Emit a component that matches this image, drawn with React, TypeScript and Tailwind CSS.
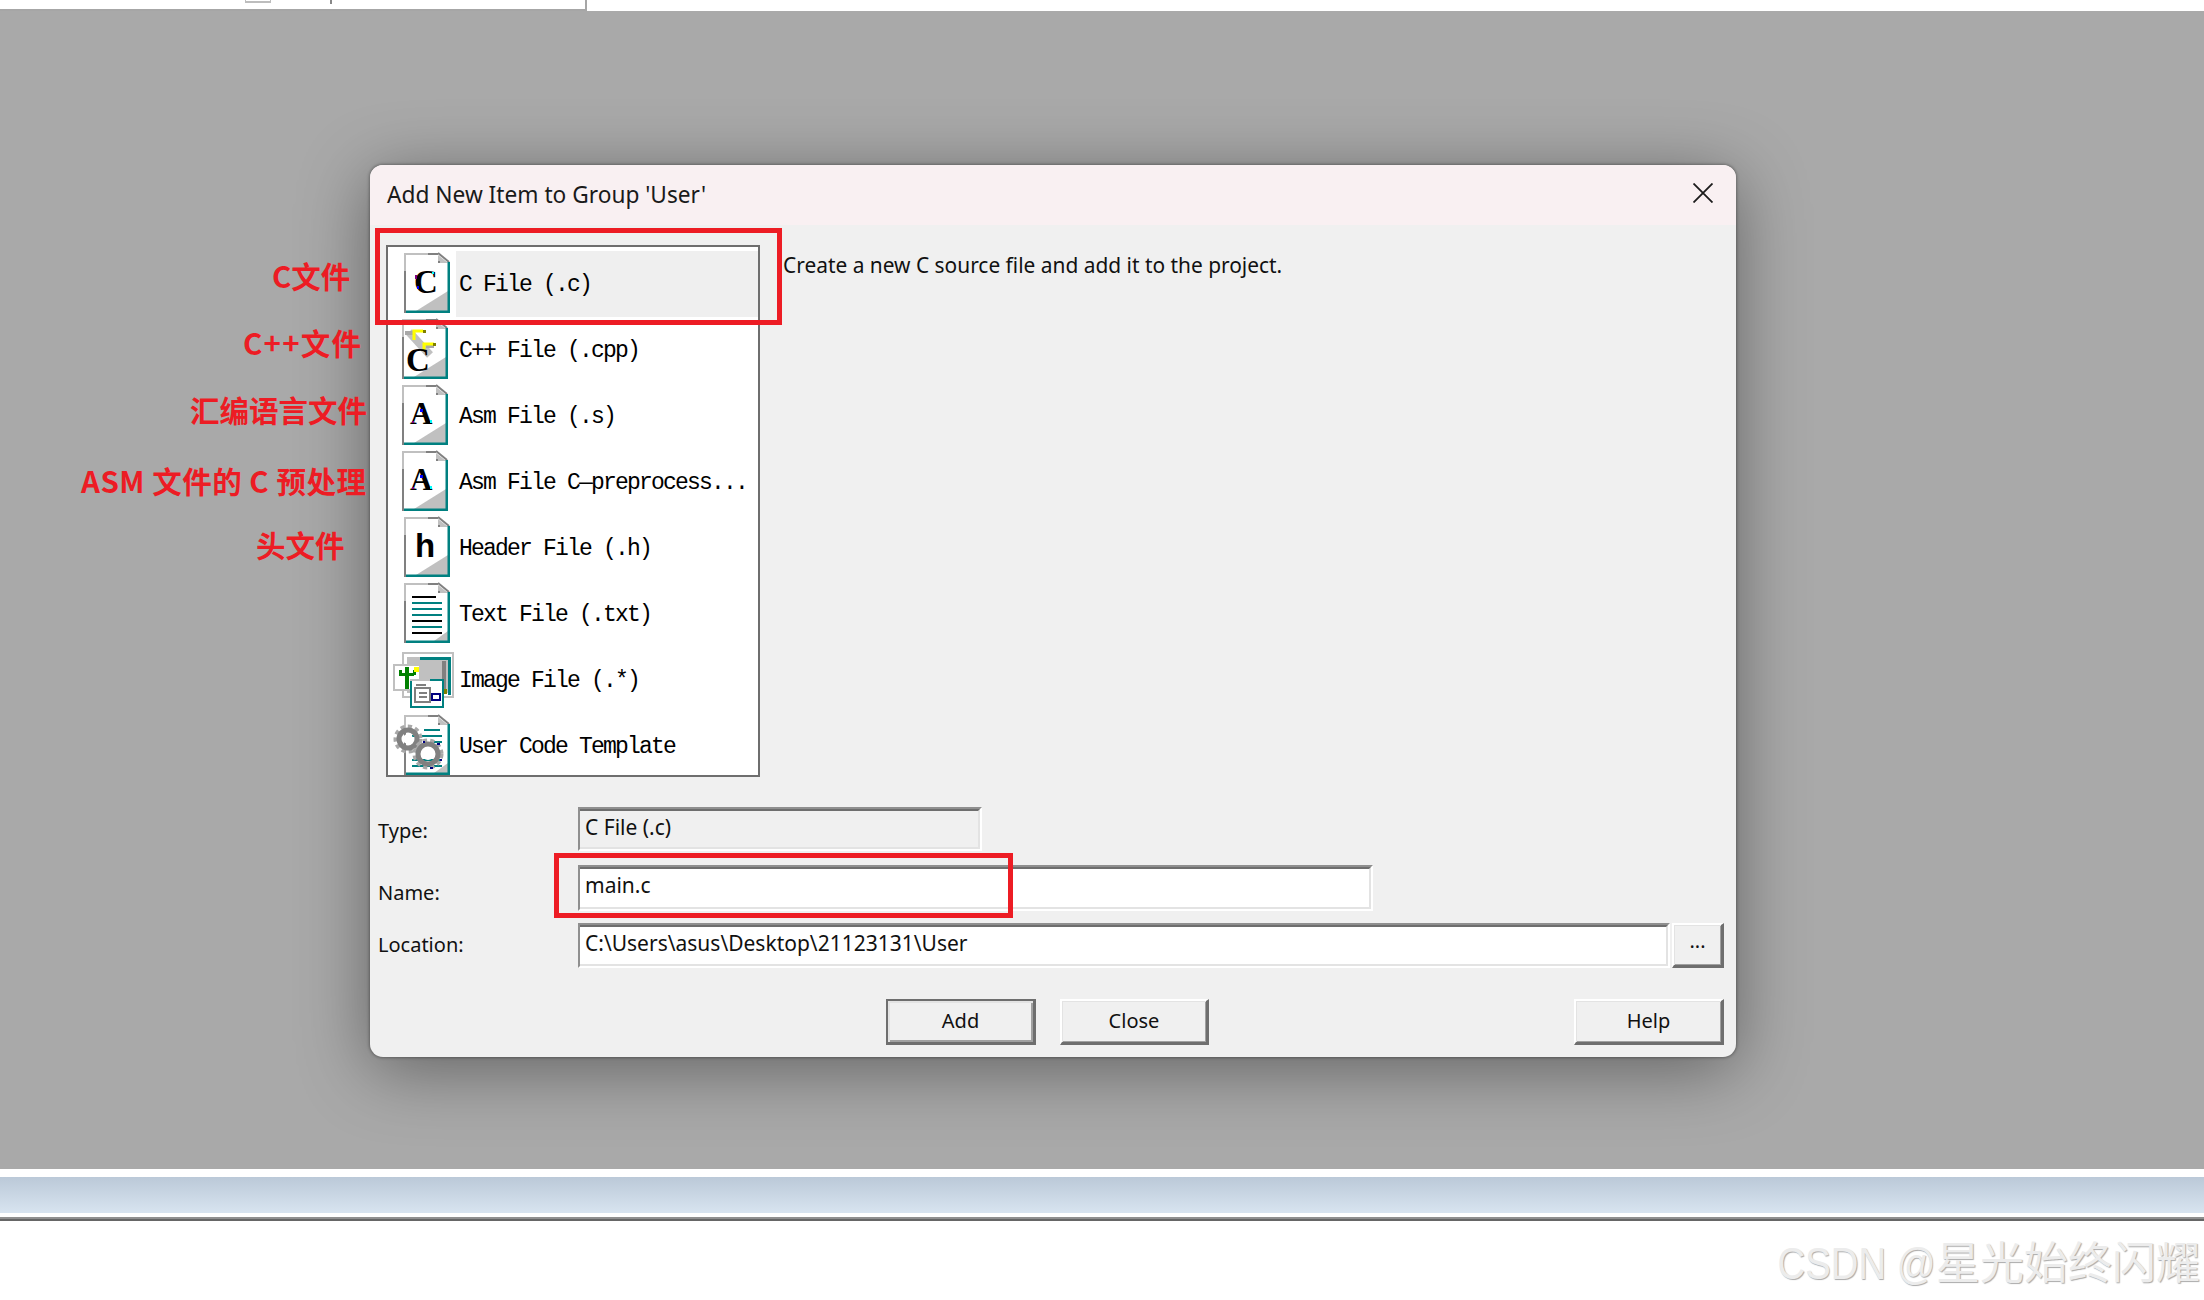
import { ReactNode } from "react"

const sans = "font-['Noto_Sans','Liberation_Sans',sans-serif]"

// Document page with folded corner, shared by most of the list icons
function Page({ x, shade = true, children }: { x: number; shade?: boolean; children?: ReactNode }) {
  return (
    <g transform={`translate(${x},2)`}>
      <polygon points="0,0 34,0 44,9 44,58 0,58" fill="#fff" />
      {shade && <polygon points="12,58 44,38 44,58" fill="#c0c0c0" />}
      {!shade && <polygon points="30,58 44,48 44,58" fill="#c0c0c0" />}
      <rect x="0" y="0" width="2" height="18" fill="#c0c0c0" />
      <rect x="0" y="18" width="2" height="42" fill="#808080" />
      <rect x="0" y="0" width="24" height="2" fill="#c0c0c0" />
      <rect x="24" y="0" width="10" height="2" fill="#808080" />
      <polygon points="34,2 34,10 44,10" fill="#c0c0c0" />
      <line x1="34" y1="0" x2="45" y2="9" stroke="#808080" strokeWidth="2" />
      <rect x="34" y="8" width="2" height="2" fill="#808080" />
      <rect x="43.5" y="9" width="2.5" height="51" fill="#008080" />
      <rect x="2" y="57.5" width="44" height="2.5" fill="#008080" />
      {children}
    </g>
  )
}

function Letter({ ch, x, y, size = 33, family = "Liberation Serif" }: { ch: string; x: number; y: number; size?: number; family?: string }) {
  return (
    <text x={x} y={y} fontFamily={family} fontWeight="700" fontSize={size} fill="#000">
      {ch}
    </text>
  )
}

function Gear({ cx, cy, r }: { cx: number; cy: number; r: number }) {
  return (
    <g>
      <circle cx={cx} cy={cy} r={r} fill="none" stroke="#a8a8a8" strokeWidth="5" strokeDasharray="4 3" />
      <circle cx={cx} cy={cy} r={r - 3} fill="none" stroke="#808080" strokeWidth="5" />
      <circle cx={cx} cy={cy} r={r - 7} fill="#fff" />
    </g>
  )
}

const slot = { width: 68, height: 66, viewBox: "0 0 68 66", className: "shrink-0" }

function CIcon() {
  return (
    <svg {...slot}>
      <Page x={16}>
        <Letter ch="C" x={10} y={40} />
        <rect x="11" y="22" width="2" height="4" fill="#800080" />
        <rect x="13" y="33" width="2" height="3" fill="#0000ff" />
        <rect x="28" y="19" width="2" height="2" fill="#00ffff" />
      </Page>
    </svg>
  )
}

function CppIcon() {
  return (
    <svg {...slot}>
      <Page x={14}>
        <line x1="7" y1="13" x2="28" y2="36" stroke="#c0c0c0" strokeWidth="8" />
        <rect x="3" y="12" width="10" height="4" fill="#a8a8a8" />
        <rect x="24" y="25" width="8" height="4" fill="#a8a8a8" />
        <polyline points="12,21 12,12 21,12" fill="none" stroke="#ffff00" strokeWidth="3" />
        <polyline points="22,31 22,25 32,25" fill="none" stroke="#ffff00" strokeWidth="3" />
        <rect x="21" y="11" width="3" height="3" fill="#808000" />
        <rect x="31" y="24" width="3" height="3" fill="#808000" />
        <Letter ch="C" x={4} y={52} size={33} />
      </Page>
    </svg>
  )
}

function AIcon() {
  return (
    <svg {...slot}>
      <Page x={14}>
        <Letter ch="A" x={8} y={39} size={31} />
        <rect x="10" y="36" width="2" height="2" fill="#800080" />
        <rect x="18" y="24" width="3" height="3" fill="#0000ff" />
        <rect x="28" y="35" width="2" height="3" fill="#00ffff" />
      </Page>
    </svg>
  )
}

function HIcon() {
  return (
    <svg {...slot}>
      <Page x={16}>
        <Letter ch="h" x={11} y={40} size={33} family="Liberation Sans" />
      </Page>
    </svg>
  )
}

function TextIcon() {
  const lines: [number, number, string][] = [
    [15, 24, "#000"],
    [21, 30, "#008080"],
    [27, 30, "#008080"],
    [33, 30, "#008080"],
    [39, 30, "#000"],
    [45, 30, "#008080"],
    [51, 30, "#000"],
  ]
  return (
    <svg {...slot}>
      <Page x={16} shade={false}>
        {lines.map(([y, w, c]) => (
          <rect key={y} x="8" y={y - 2} width={w} height="2" fill={c} />
        ))}
      </Page>
    </svg>
  )
}

function ImageIcon() {
  return (
    <svg {...slot} shapeRendering="crispEdges">
      {/* back frame */}
      <rect x="15" y="6" width="50" height="44" fill="#fff" stroke="#c0c0c0" strokeWidth="2" />
      <rect x="19" y="10" width="42" height="36" fill="#c0c0c0" />
      <rect x="32" y="10" width="30" height="3" fill="#008080" />
      <rect x="60" y="10" width="3" height="38" fill="#008080" />
      <rect x="54" y="14" width="4" height="30" fill="#808080" />
      <rect x="53" y="42" width="6" height="5" fill="#808000" />
      {/* small picture */}
      <rect x="6" y="18" width="26" height="25" fill="#fff" stroke="#c0c0c0" strokeWidth="2" />
      <rect x="17" y="20" width="4" height="22" fill="#008000" />
      <rect x="11" y="26" width="15" height="3" fill="#008000" />
      <rect x="11" y="23" width="3" height="5" fill="#008000" />
      <rect x="25" y="23" width="3" height="5" fill="#008000" />
      <rect x="26" y="20" width="5" height="5" fill="#ffff00" />
      {/* front window */}
      <rect x="23" y="33" width="32" height="27" fill="#fff" stroke="#008080" strokeWidth="2" />
      <rect x="22" y="32" width="20" height="2" fill="#c0c0c0" />
      <rect x="28" y="37" width="10" height="2" fill="#808080" />
      <rect x="27" y="41" width="15" height="14" fill="#fff" stroke="#808080" strokeWidth="2" />
      <rect x="31" y="45" width="8" height="2" fill="#808080" />
      <rect x="31" y="49" width="8" height="2" fill="#808080" />
      <rect x="44" y="47" width="8" height="6" fill="#fff" stroke="#000080" strokeWidth="2" />
    </svg>
  )
}

function TemplateIcon() {
  return (
    <svg {...slot}>
      <Page x={16} shade={false}>
        <rect x="20" y="14" width="16" height="2" fill="#008080" />
        <rect x="8" y="20" width="30" height="2" fill="#008080" />
        <rect x="28" y="26" width="10" height="2" fill="#008080" />
        <rect x="8" y="44" width="30" height="2" fill="#008080" />
        <rect x="8" y="50" width="30" height="2" fill="#008080" />
      </Page>
      <Gear cx={20} cy={26} r={12} />
      <Gear cx={40} cy={41} r={13} />
      <rect x="35" y="28" width="2" height="2" fill="#000080" />
      <rect x="49" y="30" width="3" height="2" fill="#000080" />
      <rect x="52" y="46" width="2" height="2" fill="#000080" />
      <rect x="42" y="54" width="3" height="2" fill="#000080" />
    </svg>
  )
}

const fileRows: { label: string; icon: ReactNode; active?: boolean }[] = [
  { label: "C File (.c)", icon: <CIcon />, active: true },
  { label: "C++ File (.cpp)", icon: <CppIcon /> },
  { label: "Asm File (.s)", icon: <AIcon /> },
  { label: "Asm File C—preprocess...", icon: <AIcon /> },
  { label: "Header File (.h)", icon: <HIcon /> },
  { label: "Text File (.txt)", icon: <TextIcon /> },
  { label: "Image File (.*)", icon: <ImageIcon /> },
  { label: "User Code Template", icon: <TemplateIcon /> },
]

// Sunken Win32 edit box
function Field({ value, className, fill }: { value: string; className: string; fill: string }) {
  return (
    <div className={`border-2 border-t-[#8f8f8f] border-l-[#8f8f8f] border-r-white border-b-white ${className}`}>
      <div
        className={`h-full border-t-2 border-l-0 border-r-2 border-b-2 border-t-[#6e6e6e] border-r-[#e3e3e3] border-b-[#e3e3e3] pl-[5px] text-[21px] leading-[32px] text-[#111] ${fill}`}
      >
        {value}
      </div>
    </div>
  )
}

function Button({ label, className, primary }: { label: string; className: string; primary?: boolean }) {
  return (
    <div
      className={`flex items-center justify-center border-2 text-[20px] text-[#111] bg-[#f0f0f0] ${
        primary
          ? "border-[#6e6e6e] border-b-[3px] border-r-[3px] shadow-[inset_2px_2px_0_#e3e3e3,inset_-2px_-2px_0_#a0a0a0]"
          : "border-t-white border-l-white border-r-[#6e6e6e] border-b-[#6e6e6e] border-b-[3px] border-r-[3px] shadow-[inset_1px_1px_0_#e3e3e3,inset_-1px_-1px_0_#a0a0a0]"
      } ${className}`}
    >
      {label}
    </div>
  )
}

export default function App() {
  return (
    <div className={`relative flex h-[1300px] w-[2204px] flex-col overflow-hidden bg-white ${sans}`}>
      {/* Strip of the window behind */}
      <div className="flex h-[11px] shrink-0">
        <div className="relative h-[11px] w-[587px] border-r-2 border-b-2 border-[#a6a6a6]">
          <div className="absolute left-[245px] top-0 h-[3px] w-[26px] border-x border-b-2 border-[#bdbdbd]" />
          <div className="absolute left-[330px] top-0 h-[4px] w-[2px] bg-[#888]" />
        </div>
      </div>

      {/* Dimmed workspace */}
      <div className="h-[1158px] shrink-0 bg-[#a9a9a9] pl-[370px] pt-[154px]">
        <div className="h-[892px] w-[1366px] overflow-hidden rounded-[13px] bg-[#f0f0f0] shadow-[0_0_3px_1px_rgba(0,0,0,0.3),0_12px_70px_rgba(0,0,0,0.42)]">
          <div className="flex h-[60px] items-center justify-between bg-[#f9f0f2] pl-[17px] pr-[23px]">
            <span className="text-[22.7px] text-[#1a1a1a]">Add New Item to Group 'User'</span>
            <svg width="20" height="20" viewBox="0 0 20 20" className="-mt-[4px]">
              <path d="M0.5 0.5L19.5 19.5M19.5 0.5L0.5 19.5" stroke="#1c1c1c" strokeWidth="1.8" fill="none" />
            </svg>
          </div>

          <div className="flex pl-4 pt-5">
            <div className="h-[532px] w-[374px] shrink-0 overflow-hidden border-2 border-[#6e6e6e] bg-white">
              <div className="pt-1">
                {fileRows.map((row) => (
                  <div key={row.label} className="flex h-[66px] items-start">
                    {row.icon}
                    <div
                      className={`flex h-[66px] flex-1 items-center pl-[3px] pt-[2px] font-['Liberation_Mono',monospace] text-[23px] tracking-[-1.8px] text-black ${
                        row.active ? "bg-[#efefef]" : ""
                      }`}
                    >
                      {row.label}
                    </div>
                  </div>
                ))}
              </div>
            </div>
            <p className="ml-[23px] mt-[5px] text-[20.9px] leading-[30px] text-[#111]">
              Create a new C source file and add it to the project.
            </p>
          </div>

          <div className="mt-[30px] flex flex-col pl-[8px] pr-[12px] text-[20px] text-[#111]">
            <div className="flex items-start">
              <span className="w-[200px] pt-[9px] leading-[30px]">Type:</span>
              <Field value="C File (.c)" className="h-[44px] w-[404px]" fill="bg-[#f0f0f0]" />
            </div>
            <div className="mt-[14px] flex items-start">
              <span className="w-[200px] pt-[13px] leading-[30px]">Name:</span>
              <Field value="main.c" className="h-[46px] w-[795px]" fill="bg-white" />
            </div>
            <div className="mt-[12px] flex items-start">
              <span className="w-[200px] pt-[7px] leading-[30px]">Location:</span>
              <Field value="C:\Users\asus\Desktop\21123131\User" className="h-[45px] w-[1092px]" fill="bg-white" />
              <Button label="..." className="ml-[2px] h-[45px] w-[52px] pb-2" />
            </div>
            <div className="mt-[31px] flex h-[46px]">
              <Button label="Add" primary className="ml-[508px] w-[150px] pb-[1px]" />
              <Button label="Close" className="ml-[24px] w-[149px] pb-[1px]" />
              <Button label="Help" className="ml-auto w-[150px] pb-[1px]" />
            </div>
          </div>
        </div>
      </div>

      {/* Bottom chrome of the window behind */}
      <div className="h-[8px] shrink-0 bg-white" />
      <div className="h-[36px] shrink-0 bg-gradient-to-b from-[#bbc9d8] to-[#d8e4f0]" />
      <div className="h-[4px] shrink-0 bg-white" />
      <div className="h-[2px] shrink-0 bg-[#909090]" />
      <div className="h-[2px] shrink-0 bg-[#666]" />
      <div className="flex flex-1 justify-end pr-[4px] pt-[17px]">
        <span className="font-['Liberation_Sans','Noto_Sans_CJK_SC',sans-serif] text-[44px] leading-[52px] text-[#ececec] [text-shadow:1px_1px_1px_#aaaaaa]">
          <span className="inline-block origin-right scale-x-[0.87]">CSDN @</span>星光始终闪耀
        </span>
      </div>

      {/* Red annotations drawn over the screenshot */}
      <div className="absolute left-[375px] top-[228px] h-[97px] w-[407px] border-[5px] border-[#ed1c24]" />
      <div className="absolute left-[554px] top-[853px] h-[65px] w-[459px] border-[5px] border-[#ed1c24]" />
      {[
        ["C文件", "left-[272px] top-[255px]"],
        ["C++文件", "left-[243px] top-[322px] tracking-[1.2px]"],
        ["汇编语言文件", "left-[190px] top-[389px]"],
        ["ASM 文件的 C 预处理", "left-[81px] top-[460px] tracking-[0.5px]"],
        ["头文件", "left-[256px] top-[524px]"],
      ].map(([text, pos]) => (
        <span
          key={text}
          className={`absolute whitespace-nowrap font-['Noto_Sans_CJK_SC','Noto_Sans',sans-serif] text-[29.5px] font-bold leading-[40px] text-[#ed1c24] ${pos}`}
        >
          {text}
        </span>
      ))}
    </div>
  )
}
